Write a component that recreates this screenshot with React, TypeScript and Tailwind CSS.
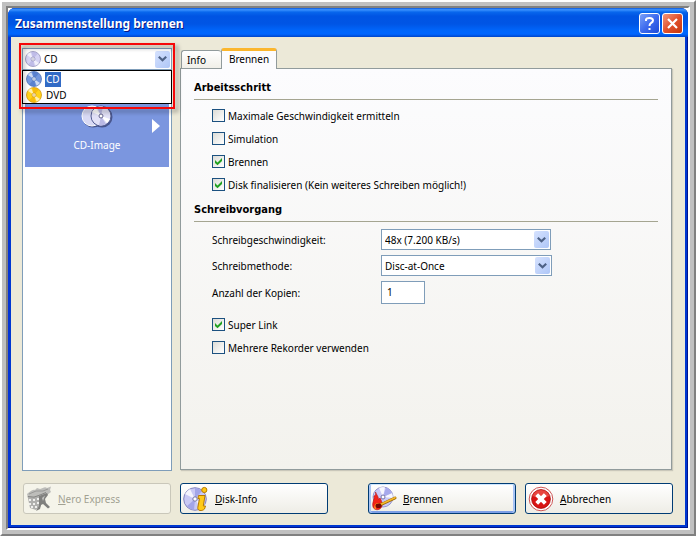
import React, { useState } from 'react';

const Disc: React.FC<{ className?: string; base: string; shade: string; edge: string }> = ({ className, base, shade, edge }) => (
  <svg viewBox="0 0 24 24" className={className} aria-hidden="true">
    <circle cx="12" cy="12" r="11.3" fill={base} stroke={edge} strokeWidth="1" />
    <path d="M12 12 L3 6 A11 11 0 0 1 8 2 Z M12 12 L21 18 A11 11 0 0 1 16 22 Z" fill="#fff" opacity="0.65" />
    <path d="M12 12 L10 1.4 A11 11 0 0 1 19 4 Z M12 12 L14 22.6 A11 11 0 0 1 5 20 Z" fill={shade} opacity="0.5" />
    <circle cx="12" cy="12" r="3" fill="#fff" stroke={edge} strokeWidth="1" />
    <circle cx="12" cy="12" r="1" fill={edge} />
  </svg>
);

const Chevron: React.FC = () => (
  <span className="pointer-events-none col-start-1 row-start-1 mr-[2px] flex h-[17px] w-[15px] items-center justify-center self-center justify-self-end rounded-[2px] bg-linear-to-br from-[#d6e2fe] to-[#aec6f7]">
    <svg viewBox="0 0 9 6" className="h-[6px] w-[9px]" aria-hidden="true">
      <path d="M0.8 0.8 L4.5 4.3 L8.2 0.8" fill="none" stroke="#4d6185" strokeWidth="2.2" />
    </svg>
  </span>
);

interface CheckProps {
  id: string;
  label: string;
  initial?: boolean;
}

const Check: React.FC<CheckProps> = ({ id, label, initial = false }) => {
  const [checked, setChecked] = useState(initial);

  return (
    <div className="flex h-[23px] items-center gap-[3px] pl-[18px]">
      <span className="grid">
        <input
          id={id}
          type="checkbox"
          checked={checked}
          onChange={() => setChecked(!checked)}
          className="col-start-1 row-start-1 h-[13px] w-[13px] appearance-none border border-[#1c5180] bg-linear-to-br from-[#dcdcd7] to-white"
        />
        {checked && (
          <svg viewBox="0 0 13 13" className="pointer-events-none col-start-1 row-start-1 h-[13px] w-[13px]" aria-hidden="true">
            <path d="M3 5 L5.5 7.5 L10 3 V6 L5.5 10.3 L3 8 Z" fill="#21a121" />
          </svg>
        )}
      </span>
      <label htmlFor={id} className="whitespace-nowrap">{label}</label>
    </div>
  );
};

const SectionTitle: React.FC<{ children: React.ReactNode }> = ({ children }) => (
  <h2 className="border-b border-[#a5a591] pb-[2px] font-['DejaVu_Sans_Condensed',sans-serif] text-[11px] leading-[18px] font-bold">
    {children}
  </h2>
);

const InfoIcon = () => (
  <svg viewBox="0 0 26 26" className="h-[26px] w-[26px]" aria-hidden="true">
    <circle cx="12" cy="13" r="11.3" fill="#c9c9f4" stroke="#8484bd" />
    <path d="M12 13 L2 8 A11 11 0 0 1 7 3 Z M12 13 L18 23 A11 11 0 0 0 22 19 Z" fill="#fff" opacity="0.8" />
    <path d="M12 13 L12 2 A11 11 0 0 1 19 5 Z M12 13 L11 24 A11 11 0 0 1 4 20 Z" fill="#a3a5e8" />
    <circle cx="12" cy="13" r="2.2" fill="#fff" stroke="#7474aa" />
    <circle cx="21.3" cy="4" r="2.6" fill="#ffc814" stroke="#b77b00" />
    <path d="M15.5 9.5 H22 L20.3 20 H22.5 L21.5 23 C19 25.5 14.3 25 14.8 21.5 L16.5 12.5 H15 Z" fill="#ffca18" stroke="#b57900" />
  </svg>
);

const BurnIcon = () => (
  <svg viewBox="0 0 26 26" className="h-[26px] w-[26px]" aria-hidden="true">
    <circle cx="12" cy="11" r="10" fill="#c9c9f6" stroke="#9696cc" />
    <path d="M12 11 L8 1.8 A10 10 0 0 1 14 1.2 Z M12 11 L21 7 A10 10 0 0 1 22 12 Z" fill="#fff" opacity="0.85" />
    <path d="M12 11 L15 1.5 A10 10 0 0 1 21 7 Z" fill="#a7a9ec" />
    <circle cx="12" cy="11" r="2" fill="#fff" stroke="#7474aa" />
    <path d="M4.5 6 C5.5 9 7.5 10 7.5 13.5 L9 12 C10 14 11.5 16 11 20 C10 24.5 3.5 25 2 21 C0.5 17 4 13 3 10 C4.5 10 5 8 4.5 6 Z" fill="#f42318" stroke="#b91010" strokeWidth="0.6" />
    <path d="M4.5 23 C3 20 5 17 8 18" stroke="#ff8d20" strokeWidth="1.5" fill="none" />
    <path d="M9 19 L24 12" stroke="#9c6500" strokeWidth="3" strokeLinecap="round" />
    <path d="M9 18.7 L24 11.7" stroke="#f5ba2c" strokeWidth="1.6" strokeLinecap="round" />
    <ellipse cx="7.5" cy="19.7" rx="3" ry="2.3" fill="#730707" />
  </svg>
);

const CancelIcon = () => (
  <svg viewBox="0 0 26 26" className="h-[26px] w-[26px]" aria-hidden="true">
    <circle cx="13" cy="13" r="11.8" fill="#fff" stroke="#c74343" strokeWidth="0.9" />
    <circle cx="13" cy="13" r="9.4" fill="#d81414" stroke="#a90808" strokeWidth="0.8" />
    <path d="M4.5 10 A9 9 0 0 1 21.5 10 Q13 14 4.5 10 Z" fill="#f4655b" opacity="0.6" />
    <path d="M8.7 8.7 L17.3 17.3 M17.3 8.7 L8.7 17.3" stroke="#fff" strokeWidth="4" />
  </svg>
);

const NeroIcon = () => (
  <svg viewBox="0 0 26 26" className="h-[26px] w-[26px]" aria-hidden="true">
    <path d="M1 8 C4 6 6 3 9 4 L11 2 L14 3 C17 2 19 0 21 2 L25 0.5 L24 4 L25 6 L21 9 L17 10 L14 14 L2 12 Z" fill="#bdbdba" />
    <path d="M3 8 L10 5 L17 5 L22 3" fill="none" stroke="#989896" />
    <path d="M1.5 10 Q8 12.5 14 8.5 L15 20 L10 24 L4 22 Z" fill="#b0b0ae" />
    <path d="M3 13 H5 V15 H3 Z M7 13 H9 V15 H7 Z M11 12 H13 V14 H11 Z M3 17 H5 V19 H3 Z M7 17 H9 V19 H7 Z M11 16 H13 V18 H11 Z M5 20 H7 V22 H5 Z M9 20 H11 V22 H9 Z" fill="#f0f0ee" />
    <path d="M13 10 L21 7 L22 9 L19 13 L20 17 L24 21 L22 22.5 L17 18 L15 19 L14 23 L10 25 L13 20 Z" fill="#80807e" />
    <path d="M16 12 L19 9.5 L17 15 Z" fill="#c4c4c2" />
    <path d="M2 10.5 Q8 12.5 14 9 L20 6.5" fill="none" stroke="#858583" />
  </svg>
);

const buttonBase = 'flex h-[31px] w-[148px] items-center rounded-[3px] border';

const App: React.FC = () => {
  const [medium, setMedium] = useState('CD');

  return (
    <div className="flex min-h-screen border-2 border-t-white border-r-[#808080] border-b-[#808080] border-l-white bg-[#c0c0c0] p-1 font-['Noto_Sans','DejaVu_Sans_Condensed',sans-serif] text-[10px] leading-4 text-black">
      <div className="flex flex-1 border-2 border-t-[#808080] border-r-white border-b-white border-l-[#808080] bg-white">
        <div className="flex flex-1 flex-col rounded-t-[7px] bg-[#0038d2] shadow-[inset_-1px_-1px_#001590,inset_1px_0_#0831d9]">
          <header className="flex h-[29px] items-center justify-between rounded-t-[7px] bg-[linear-gradient(#0a55d8_0%,#3c93ff_6%,#0867ed_14%,#0054e3_28%,#0055e5_55%,#0066fb_78%,#0066ff_90%,#0045c9_100%)] pt-[2px] pr-[5px] pl-[7px]">
            <h1 className="text-[12px] leading-5 font-bold whitespace-nowrap text-white [text-shadow:1px_1px_#0a1883]">
              Zusammenstellung brennen
            </h1>
            <div className="flex gap-[2px]">
              <button type="button" aria-label="Hilfe" className="h-[21px] w-[21px] rounded-[3px] border border-white bg-linear-to-br from-[#7ba0f8] via-[#3e6bee] to-[#1c4bd8]">
                <svg viewBox="0 0 19 19" aria-hidden="true">
                  <path d="M6 7 V5.5 Q6.5 4 9.5 4 Q13 4 13 6.5 Q13 8 11 9 Q9.5 10 9.5 12" fill="none" stroke="#fff" strokeWidth="2" />
                  <path d="M8.5 14 H10.5 V16 H8.5 Z" fill="#fff" />
                </svg>
              </button>
              <button type="button" aria-label="Schließen" className="h-[21px] w-[21px] rounded-[3px] border border-white bg-linear-to-br from-[#f0957b] via-[#e1502b] to-[#c63708]">
                <svg viewBox="0 0 19 19" aria-hidden="true">
                  <path d="M5 5 L14 14 M14 5 L5 14" stroke="#fff" strokeWidth="2.2" />
                </svg>
              </button>
            </div>
          </header>

          <main className="mx-[3px] mb-[3px] flex flex-1 flex-col bg-[#ece9d8] pt-[11px] pb-[11px]">
            <div className="flex flex-1 gap-2 pr-[13px] pl-[11px]">
              <aside className="flex w-[150px] shrink-0 flex-col">
                <div className="relative grid">
                  <select
                    aria-label="Medium"
                    value={medium}
                    onChange={(e) => setMedium(e.target.value)}
                    className="col-start-1 row-start-1 h-[22px] w-full appearance-none border border-[#7f9db9] bg-white pl-[21px]"
                  >
                    <option>CD</option>
                    <option>DVD</option>
                  </select>
                  <Disc className="pointer-events-none col-start-1 row-start-1 ml-[3px] h-4 w-4 self-center" base="#d5d3f4" shade="#a9a5dc" edge="#8583ad" />
                  <Chevron />
                  <ul role="listbox" aria-label="Medium" className="absolute inset-x-0 top-full z-10 border border-black bg-white pl-[3px]">
                    <li role="option" aria-selected="true" className="flex h-4 items-center gap-[3px]">
                      <Disc className="h-4 w-4" base="#7397df" shade="#416bbf" edge="#4468ae" />
                      <span className="bg-[#316ac5] px-px leading-[15px] text-white">CD</span>
                    </li>
                    <li role="option" aria-selected="false" className="flex h-4 items-center gap-[3px]">
                      <Disc className="h-4 w-4" base="#ffd21a" shade="#eda300" edge="#c68a00" />
                      <span className="px-px">DVD</span>
                    </li>
                  </ul>
                  <div className="pointer-events-none absolute -inset-x-[3px] -top-[5px] z-20 h-[66px] border-2 border-[#f60808] drop-shadow-[3px_3px_2px_rgba(0,0,0,0.4)]" />
                </div>

                <div className="flex-1 border border-t-0 border-[#7f9db9] bg-white px-[2px]">
                  <button type="button" className="flex h-[97px] w-full flex-col items-center bg-[#7b96df] pt-[29px] text-white">
                    <span className="grid w-full grid-cols-[1fr_auto_1fr] items-center">
                      <svg viewBox="0 0 32 24" className="col-start-2 h-6 w-8" aria-hidden="true">
                        <circle cx="12" cy="13" r="10.5" fill="#47558d" />
                        <circle cx="21" cy="13" r="10.5" fill="#47558d" />
                        <circle cx="11" cy="12" r="10" fill="#d8d9f4" stroke="#fff" />
                        <circle cx="20" cy="12" r="10" fill="#e2e1f7" stroke="#535d92" />
                        <path d="M20 12 L16 3 A10 10 0 0 1 22 2.3 Z M20 12 L18 21.5 A10 10 0 0 0 25 20 Z" fill="#b9b9e5" />
                        <path d="M20 12 L11 8 A10 10 0 0 1 15 4 Z M20 12 L29 15 A10 10 0 0 1 26 19 Z" fill="#fff" />
                        <circle cx="20" cy="12" r="2" fill="#fff" stroke="#66658e" />
                      </svg>
                      <svg viewBox="0 0 8 14" className="mt-5 mr-[9px] h-[14px] w-2 justify-self-end" aria-hidden="true">
                        <path d="M0 0 L8 7 L0 14 Z" fill="#fff" />
                      </svg>
                    </span>
                    <span className="mt-1">CD-Image</span>
                  </button>
                </div>
              </aside>

              <section className="mb-px flex flex-1 flex-col">
                <div role="tablist" className="flex h-5 items-end pl-px">
                  <button type="button" role="tab" aria-selected="false" className="h-[18px] w-10 rounded-t-[3px] border border-r-0 border-b-0 border-[#919b9c] bg-linear-to-b from-white to-[#f0efe8] pr-[10px] text-center">
                    Info
                  </button>
                  <button type="button" role="tab" aria-selected="true" className="z-10 -mb-px flex h-[21px] w-14 items-center justify-center rounded-t-[3px] border border-t-[3px] border-b-0 border-[#919b9c] border-t-[#fbb62d] bg-[#fcfcfe] pb-[2px]">
                    Brennen
                  </button>
                </div>

                <div role="tabpanel" className="flex-1 border border-[#919b9c] bg-linear-to-b from-[#fcfcfe] to-[#f3f2ed] px-[13px] pt-[10px] shadow-[1px_1px_1px_#c9c7ba]">
                  <SectionTitle>Arbeitsschritt</SectionTitle>
                  <div className="mt-1">
                    <Check id="max-speed" label="Maximale Geschwindigkeit ermitteln" />
                    <Check id="simulation" label="Simulation" />
                    <Check id="burn" label="Brennen" initial />
                    <Check id="finalize" label="Disk finalisieren (Kein weiteres Schreiben möglich!)" initial />
                  </div>

                  <div className="mt-[5px]">
                    <SectionTitle>Schreibvorgang</SectionTitle>
                  </div>
                  <div className="mt-[7px] flex flex-col gap-[5px] pl-[18px]">
                    <div className="flex items-center">
                      <label htmlFor="speed" className="w-[169px]">Schreibgeschwindigkeit:</label>
                      <span className="grid w-[170px]">
                        <select id="speed" className="col-start-1 row-start-1 h-[21px] appearance-none border border-[#7f9db9] bg-white pl-[3px]">
                          <option>48x (7.200 KB/s)</option>
                        </select>
                        <Chevron />
                      </span>
                    </div>
                    <div className="flex items-center">
                      <label htmlFor="method" className="w-[169px]">Schreibmethode:</label>
                      <span className="grid w-[171px]">
                        <select id="method" className="col-start-1 row-start-1 h-[21px] appearance-none border border-[#7f9db9] bg-white pl-[3px]">
                          <option>Disc-at-Once</option>
                        </select>
                        <Chevron />
                      </span>
                    </div>
                    <div className="flex items-center">
                      <label htmlFor="copies" className="w-[169px]">Anzahl der Kopien:</label>
                      <input id="copies" type="text" defaultValue="1" className="h-[23px] w-11 border border-[#7f9db9] bg-white pb-[2px] pl-[5px]" />
                    </div>
                  </div>
                  <div className="mt-[9px]">
                    <Check id="super-link" label="Super Link" initial />
                    <Check id="multi-recorder" label="Mehrere Rekorder verwenden" />
                  </div>
                </div>
              </section>
            </div>

            <footer className="mt-3 flex justify-between px-3">
              <div className="flex gap-[9px]">
                <button type="button" disabled className={`${buttonBase} gap-[6px] border-[#c9c7ba] bg-[#f5f4ea] pl-[2px] text-[#a1a192]`}>
                  <NeroIcon />
                  <span><u>N</u>ero Express</span>
                </button>
                <button type="button" className={`${buttonBase} gap-[6px] border-[#003c74] bg-linear-to-b from-white to-[#eeede6] pl-[2px]`}>
                  <InfoIcon />
                  <span><u>D</u>isk-Info</span>
                </button>
              </div>
              <div className="flex gap-[9px]">
                <button type="button" className={`${buttonBase} gap-[6px] border-[#003c74] bg-linear-to-b from-white to-[#eeede6] pl-[2px] shadow-[inset_0_1px_#cee7ff,inset_2px_0_#a8c4f5,inset_-2px_0_#a8c4f5,inset_0_-2px_#7d9fe6]`}>
                  <BurnIcon />
                  <span><u>B</u>rennen</span>
                </button>
                <button type="button" className={`${buttonBase} gap-[6px] border-[#003c74] bg-linear-to-b from-white to-[#eeede6] pl-[2px]`}>
                  <CancelIcon />
                  <span><u>A</u>bbrechen</span>
                </button>
              </div>
            </footer>
          </main>
        </div>
      </div>
    </div>
  );
};

export default App;
